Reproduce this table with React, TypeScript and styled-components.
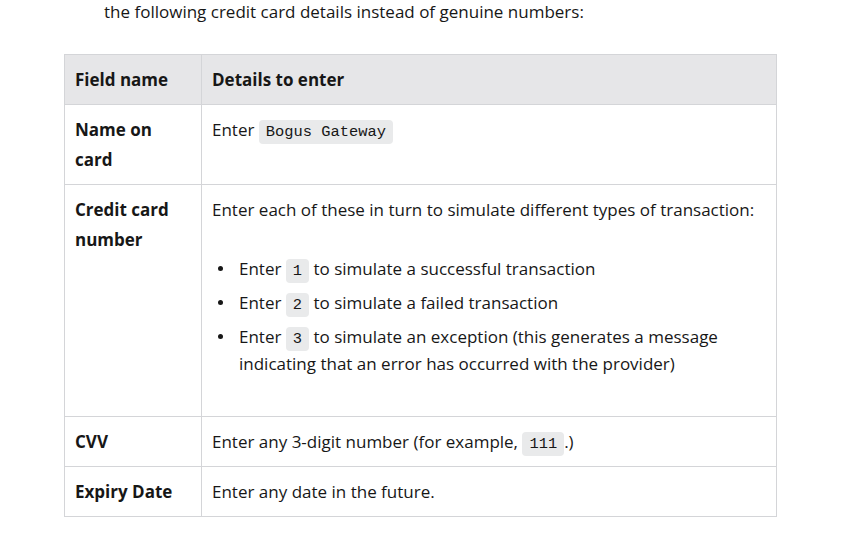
import React from "react";
import styled, { createGlobalStyle } from "styled-components";

const Global = createGlobalStyle`
  html, body { margin: 0; padding: 0; background: #ffffff; }
  body {
    font-family: "Open Sans", "Noto Sans", sans-serif;
    color: #171717;
    font-size: 17px;
  }
`;

const Page = styled.div`
  width: 860px;
  height: 546px;
  overflow: hidden;
  padding: 0 84px 0 64px;
  box-sizing: border-box;
`;

const Intro = styled.p`
  margin: 0 0 30px 40px;
  line-height: 24px;
  font-size: 17px;
`;

const Table = styled.table`
  width: 712px;
  border-collapse: collapse;
  table-layout: fixed;
`;

const Col = styled.col<{ $w: number }>`
  width: ${(p) => p.$w}px;
`;

const HeadCell = styled.th`
  background: #e6e6e8;
  border: 1px solid #d4d5d8;
  text-align: left;
  font-weight: 700;
  padding: 10px 10px 9px;
  line-height: 30px;
  vertical-align: top;
`;

const NameCell = styled.td`
  border: 1px solid #d4d5d8;
  font-weight: 700;
  padding: 10px 10px 9px;
  line-height: 30px;
  vertical-align: top;
`;

const Cell = styled.td`
  border: 1px solid #d4d5d8;
  padding: 10px 10px 9px;
  line-height: 30px;
  vertical-align: top;
`;

const CellPara = styled.p`
  margin: 0 0 30px;
`;

const List = styled.ul`
  margin: 0 0 30px;
  padding-left: 27px;
  line-height: 27px;
  list-style: none;
`;

const Item = styled.li`
  position: relative;
  margin-bottom: 7px;
  &:last-child { margin-bottom: 0; }
  &::before {
    content: "";
    position: absolute;
    left: -21px;
    top: 11px;
    width: 5px;
    height: 5px;
    border-radius: 50%;
    background: #171717;
  }
`;

const Code = styled.code`
  font-family: "Liberation Mono", "DejaVu Sans Mono", monospace;
  font-size: 15.4px;
  line-height: 1;
  background: #e9eaeb;
  border-radius: 4px;
  padding: 3px 7px;
  color: #171717;
`;

export default function App() {
  return (
    <>
      <Global />
      <Page>
        <Intro>the following credit card details instead of genuine numbers:</Intro>
        <Table>
          <colgroup>
            <Col $w={137} />
            <Col $w={575} />
          </colgroup>
          <thead>
            <tr>
              <HeadCell>Field name</HeadCell>
              <HeadCell>Details to enter</HeadCell>
            </tr>
          </thead>
          <tbody>
            <tr>
              <NameCell>Name on card</NameCell>
              <Cell>
                Enter <Code>Bogus Gateway</Code>
              </Cell>
            </tr>
            <tr>
              <NameCell>Credit card number</NameCell>
              <Cell>
                <CellPara>Enter each of these in turn to simulate different types of transaction:</CellPara>
                <List>
                  <Item>
                    Enter <Code>1</Code> to simulate a successful transaction
                  </Item>
                  <Item>
                    Enter <Code>2</Code> to simulate a failed transaction
                  </Item>
                  <Item>
                    Enter <Code>3</Code> to simulate an exception (this generates a message indicating that an error has occurred with the provider)
                  </Item>
                </List>
              </Cell>
            </tr>
            <tr>
              <NameCell>CVV</NameCell>
              <Cell>
                Enter any 3-digit number (for example, <Code>111</Code>.)
              </Cell>
            </tr>
            <tr>
              <NameCell>Expiry Date</NameCell>
              <Cell>Enter any date in the future.</Cell>
            </tr>
          </tbody>
        </Table>
      </Page>
    </>
  );
}
